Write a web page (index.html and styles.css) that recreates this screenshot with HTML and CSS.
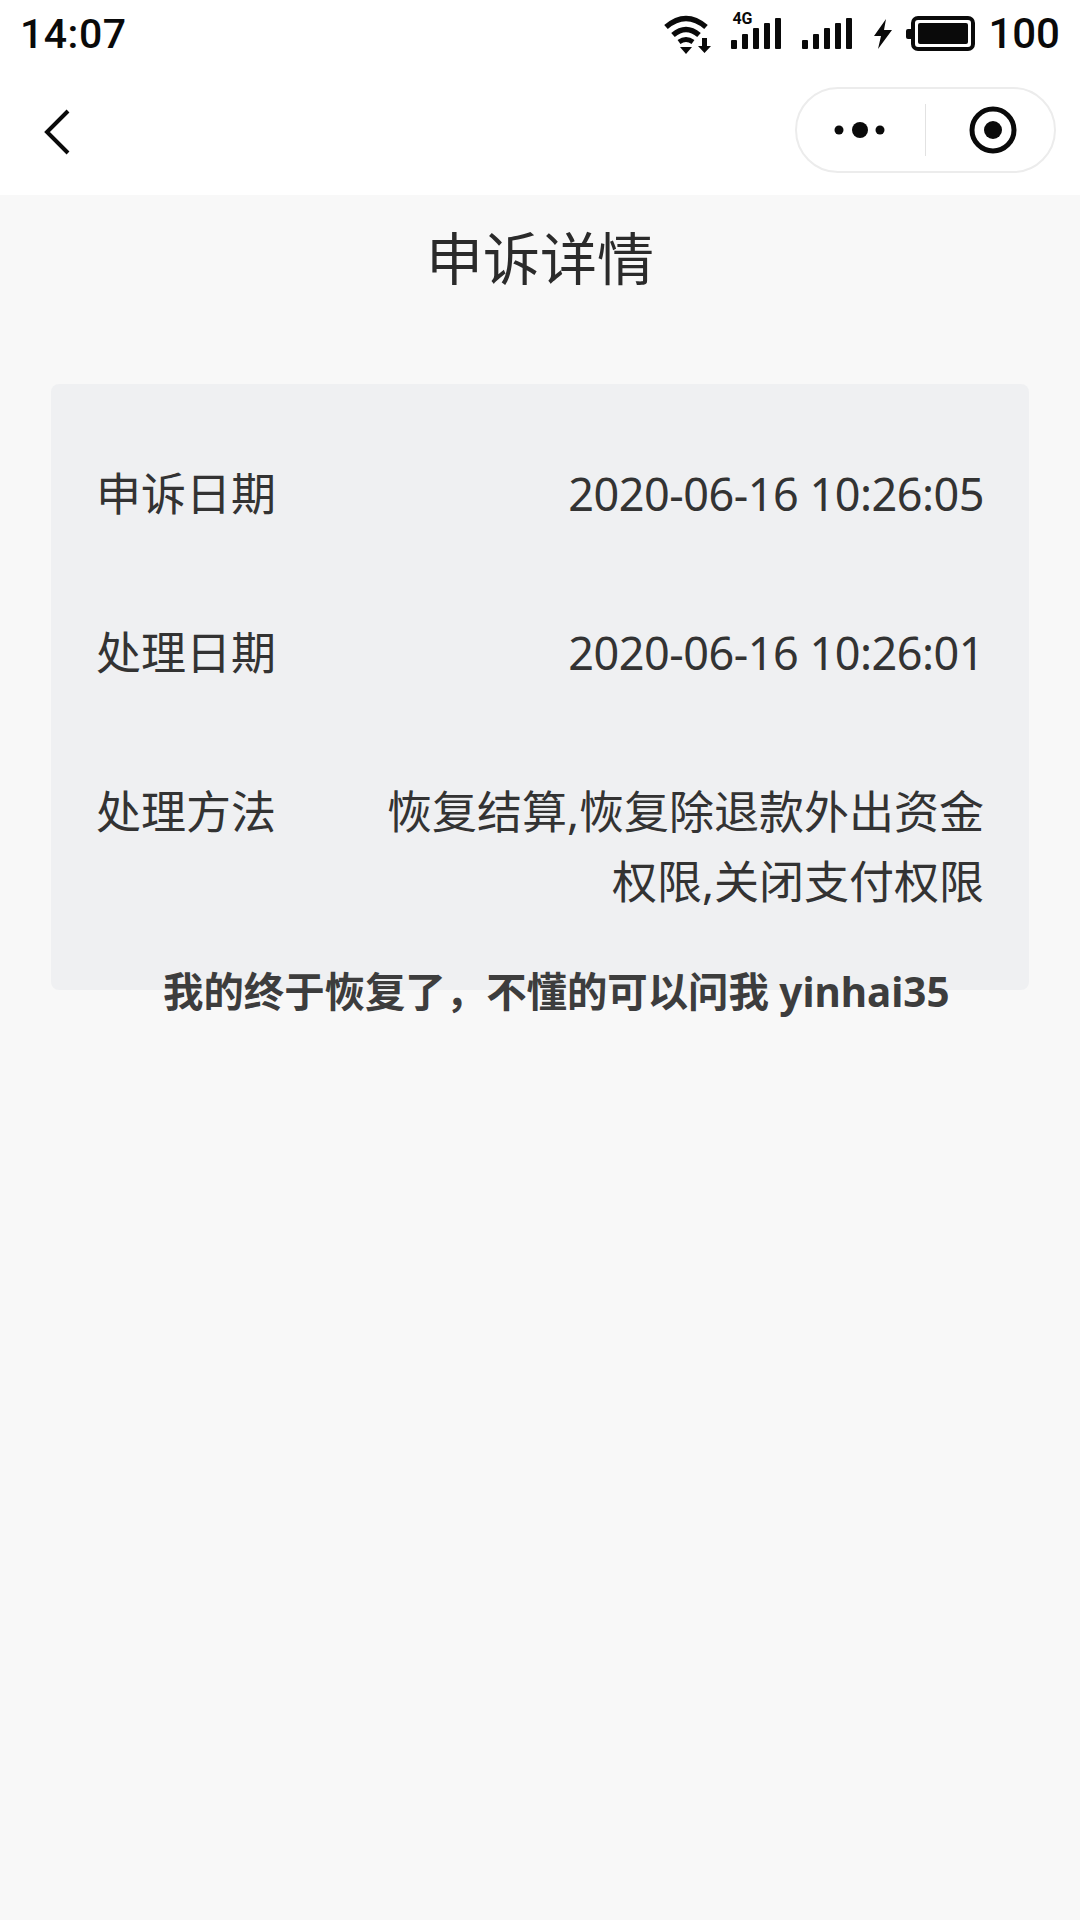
FILE: index.html
```html
<!DOCTYPE html>
<html lang="zh-CN">
<head>
    <meta charset="UTF-8">
    <meta name="viewport" content="width=device-width, initial-scale=1.0">
    <title>申诉详情</title>
    <link rel="stylesheet" href="styles.css">
</head>
<body>
    <div class="status-bar">
        <span class="clock">14:07</span>
        <div class="status-icons">
            <svg class="icon-wifi" width="48" height="40" viewBox="0 0 48 40">
                <path d="M2 13 Q22 -4 42 13" fill="none" stroke="#0a0a0a" stroke-width="5.500"/>
                <path d="M9 21 Q22 10 35 21" fill="none" stroke="#0a0a0a" stroke-width="5.500"/>
                <path d="M15 28 Q22 23 29 28" fill="none" stroke="#0a0a0a" stroke-width="5"/>
                <path d="M16 33 L28 33 L22 40 Z" fill="#0a0a0a"/>
                <path d="M38 24 H43 V32 H47 L40.500 39 L34 32 H38 Z" fill="#0a0a0a"/>
            </svg>
            <div class="signal signal-4g">
                <span class="tag-4g">4G</span>
                <svg width="50" height="32" viewBox="0 0 50 32">
                    <rect x="0" y="22" width="6" height="9" rx="1"/>
                    <rect x="11" y="16" width="6" height="15" rx="1"/>
                    <rect x="22" y="10" width="6" height="21" rx="1"/>
                    <rect x="33" y="5" width="6" height="26" rx="1"/>
                    <rect x="44" y="0" width="6" height="31" rx="1"/>
                </svg>
            </div>
            <div class="signal">
                <svg width="50" height="32" viewBox="0 0 50 32">
                    <rect x="0" y="22" width="6" height="9" rx="1"/>
                    <rect x="11" y="16" width="6" height="15" rx="1"/>
                    <rect x="22" y="10" width="6" height="21" rx="1"/>
                    <rect x="33" y="5" width="6" height="26" rx="1"/>
                    <rect x="44" y="0" width="6" height="31" rx="1"/>
                </svg>
            </div>
            <svg class="icon-bolt" width="20" height="30" viewBox="0 0 20 30">
                <path d="M13 0 L1 17 H8 L5 30 L19 11 H11 Z" fill="#0a0a0a"/>
            </svg>
            <div class="battery">
                <span class="battery-cap"></span>
                <div class="battery-body"><span class="battery-fill"></span></div>
            </div>
            <span class="battery-num">100</span>
        </div>
    </div>

    <nav>
        <svg class="back" width="28" height="46" viewBox="0 0 28 46">
            <path d="M24 2 L3 23 L24 44" fill="none" stroke="#0a0a0a" stroke-width="4"/>
        </svg>
        <div class="capsule">
            <svg width="52" height="18" viewBox="0 0 52 18">
                <circle cx="5" cy="9" r="4.500"/>
                <circle cx="26" cy="9" r="8"/>
                <circle cx="46" cy="9" r="4.500"/>
            </svg>
            <span class="capsule-line"></span>
            <svg width="48" height="48" viewBox="0 0 48 48">
                <circle cx="24" cy="24" r="21" fill="none" stroke="#0a0a0a" stroke-width="5"/>
                <circle cx="24" cy="24" r="9"/>
            </svg>
        </div>
    </nav>

    <div class="page">
        <h1>申诉详情</h1>
        <div class="card">
            <div class="row">
                <span class="label">申诉日期</span>
                <span class="value value-date">2020-06-16 10:26:05</span>
            </div>
            <div class="row">
                <span class="label">处理日期</span>
                <span class="value value-date">2020-06-16 10:26:01</span>
            </div>
            <div class="row">
                <span class="label">处理方法</span>
                <span class="value value-wrap">恢复结算,恢复除退款外出资金权限,关闭支付权限</span>
            </div>
        </div>
        <p class="note">我的终于恢复了，不懂的可以问我 yinhai35</p>
    </div>
</body>
</html>
```

FILE: styles.css
```css
* { box-sizing: border-box; }
body {
    margin: 0;
    width: 1080px;
    height: 1920px;
    overflow: hidden;
    font-family: "Noto Sans", "Noto Sans CJK SC", sans-serif;
    background-color: #f8f8f8;
    color: #2b2b2b;
    display: flex;
    flex-direction: column;
}
.status-bar {
    height: 70px;
    padding: 0 20px 3px 20px;
    background-color: #fff;
    display: flex;
    align-items: center;
    justify-content: space-between;
    color: #0a0a0a;
}
.clock {
    font-family: Roboto, sans-serif;
    font-weight: 500;
    font-size: 41px;
    letter-spacing: 0.5px;
}
.status-icons {
    display: flex;
    align-items: center;
}
.icon-wifi {
    margin-right: 19px;
}
.signal {
    position: relative;
    display: flex;
    margin-right: 21px;
}
.signal svg {
    display: block;
    fill: #0a0a0a;
}
.tag-4g {
    position: absolute;
    left: 1px;
    top: -9px;
    font-family: Roboto, sans-serif;
    font-weight: 700;
    font-size: 16px;
}
.icon-bolt {
    margin: 0 13px 0 0;
}
.battery {
    display: flex;
    align-items: center;
    margin-right: 13px;
}
.battery-cap {
    width: 5px;
    height: 10px;
    background-color: #0a0a0a;
    border-radius: 2px 0 0 2px;
}
.battery-body {
    width: 64px;
    height: 35px;
    padding: 3px;
    border: 4px solid #0a0a0a;
    border-radius: 7px;
}
.battery-fill {
    display: block;
    height: 100%;
    background-color: #0a0a0a;
    border-radius: 2px;
}
.battery-num {
    font-family: Roboto, sans-serif;
    font-weight: 500;
    font-size: 42px;
}
nav {
    height: 125px;
    padding: 0 24px 0 44px;
    background-color: #fff;
    display: flex;
    align-items: center;
    justify-content: space-between;
}
.back {
    display: block;
    margin-bottom: 2px;
}
.capsule {
    width: 261px;
    height: 86px;
    margin-bottom: 6px;
    border: 2px solid #ececec;
    border-radius: 43px;
    display: flex;
    align-items: center;
    padding: 0 0 0 37px;
    fill: #0a0a0a;
}
.capsule-line {
    width: 1px;
    height: 52px;
    margin: 0 43px 0 39px;
    background-color: #e2e2e2;
}
.page {
    flex: 1;
    padding: 0 51px;
}
h1 {
    margin: 25px 0 0;
    text-align: center;
    font-weight: 400;
    font-size: 57px;
    line-height: 76px;
    color: #2b2b2b;
}
.card {
    height: 606px;
    margin-top: 88px;
    padding: 75px 45px 0 45px;
    background-color: #eff0f2;
    border-radius: 8px;
}
.row {
    display: flex;
    justify-content: space-between;
    font-size: 45px;
    line-height: 70px;
    margin-bottom: 89px;
    color: #333;
}
.label {
    flex: none;
}
.value {
    text-align: right;
}
.value-date {
    letter-spacing: -0.5px;
}
.value-wrap {
    width: 610px;
}
.note {
    margin: -26px 0 0 112px;
    font-weight: 700;
    font-size: 40.400px;
    line-height: 56px;
    color: #3d3d3d;
}
```
